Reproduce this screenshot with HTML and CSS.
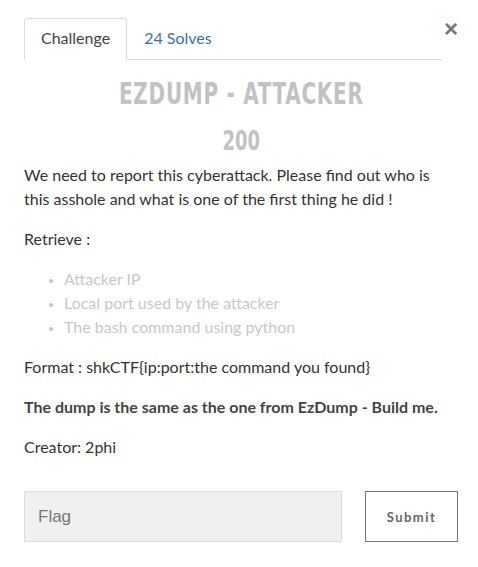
FILE: index.html
```html
<!DOCTYPE html>
<html>

	<head>
		<meta charset="UTF-8">
		<title>EzDump - Attacker</title>
		<link rel="stylesheet" href="styles.css">
	</head>

	<body>
		<div class="modal">
			<div class="head">
				<ul class="tabs">
					<li class="tab active">Challenge</li>
					<li class="tab"><a href="#">24 Solves</a></li>
				</ul>
				<button class="close">&times;</button>
			</div>
			<h2 class="title"><span>EZDUMP - ATTACKER</span></h2>
			<h3 class="value"><span>200</span></h3>
			<div class="desc">
				<p>We need to report this cyberattack. Please find out who is this asshole and what is one of the first thing he did !</p>
				<p>Retrieve :</p>
				<ul class="list">
					<li>Attacker IP</li>
					<li>Local port used by the attacker</li>
					<li>The bash command using python</li>
				</ul>
				<p>Format : shkCTF{ip:port:the command you found}</p>
				<p><strong>The dump is the same as the one from EzDump - Build me.</strong></p>
				<p>Creator: 2phi</p>
			</div>
			<form class="submit-row">
				<input class="flag" type="text" placeholder="Flag">
				<button class="btn" type="button">Submit</button>
			</form>
		</div>
	</body>

</html>
```

FILE: styles.css
```css
body,
p,
ul,
h2,
h3 {
	margin: 0;
	padding: 0;
}

body {
	background: #ffffff;
	font: 16px/24px "Lato", "Open Sans", sans-serif;
	color: #333333;
}

.modal {
	padding: 18px 20px 0 24px;
}

.head {
	display: flex;
	align-items: flex-start;
}

.tabs {
	flex: 1;
	display: flex;
	list-style: none;
	border-bottom: 1px solid #dddddd;
	margin-right: 2px;
}

.tab {
	padding: 7px 16px 9px;
	height: 24px;
	border: 1px solid transparent;
	border-radius: 4px 4px 0 0;
	margin-bottom: -1px;
}

.tab.active {
	border-color: #dddddd;
	border-bottom-color: #ffffff;
	color: #444444;
}

.tab a {
	color: #3a72a8;
	text-decoration: none;
}

.close {
	border: 0;
	background: none;
	padding: 0;
	margin-top: 1px;
	font: bold 24px/20px "Liberation Sans", sans-serif;
	color: #777777;
}

.title,
.value {
	text-align: center;
	font-family: "DejaVu Sans Condensed", sans-serif;
	font-weight: bold;
	color: #c2c2c2;
}

.title span,
.value span {
	display: inline-block;
	transform: scaleX(0.74);
}

.title {
	margin-top: 16px;
	font-size: 30px;
	line-height: 36px;
	letter-spacing: 1px;
}

.value {
	margin-top: 13px;
	font-size: 27px;
	line-height: 32px;
}

.desc {
	margin-top: 6px;
	padding-right: 12px;
}

.desc p,
.list {
	margin-bottom: 16px;
}

.list {
	padding-left: 40px;
	color: #c8c8c8;
}

.list li::marker {
	font-size: 13px;
}

.desc strong {
	color: #444444;
}

.submit-row {
	display: flex;
	justify-content: space-between;
	margin-top: 32px;
}

.flag {
	width: 318px;
	height: 51px;
	box-sizing: border-box;
	padding: 0 13px;
	background: #f0f0f0;
	border: 1px solid #dcdcdc;
	font: 17px "Liberation Sans", sans-serif;
	color: #555555;
}

.flag::placeholder {
	color: #777777;
}

.btn {
	width: 93px;
	height: 51px;
	background: #ffffff;
	border: 1px solid #777777;
	font: bold 13px "Lato", sans-serif;
	letter-spacing: 1.5px;
	color: #666666;
}
```
